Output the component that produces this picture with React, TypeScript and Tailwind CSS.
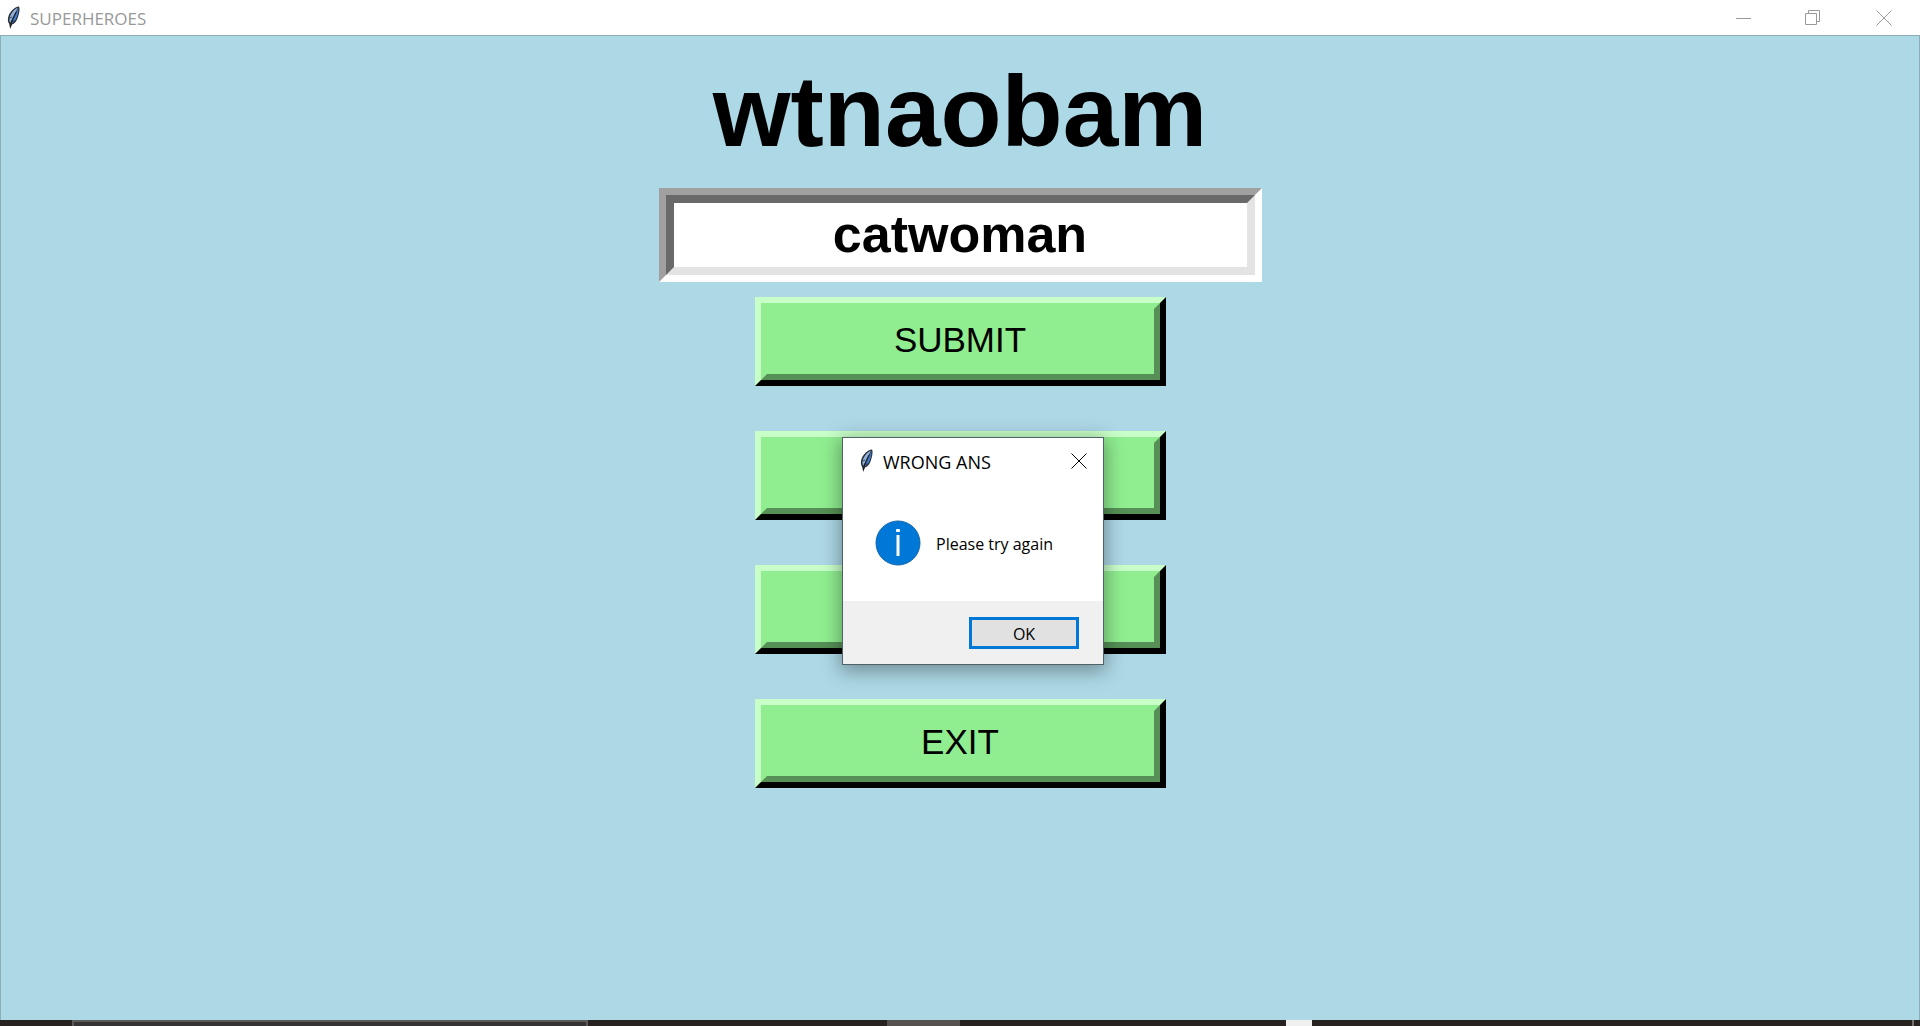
import type { ReactNode } from "react";

function Feather() {
  return (
    <svg className="h-6 w-4 shrink-0" viewBox="0 0 16 24" aria-hidden="true">
      <path d="M13 .5C8.500 1 4 5.500 2.500 10c-1 3-.800 6 .700 8L4.200 23l1.800-4.500c3-1 5-4 6-7.500C13.200 7.500 14.200 3 13 .5z" fill="#2a2e35" />
      <path d="M12 1.500C8.500 3 5 7 3.800 11c-.600 2.300-.500 4.300.400 5.800C7.500 11 9.500 6.500 12 1.500z" fill="#8fb0da" />
      <path d="M12.300 2C10.500 7.500 8 12 5.500 17.500c2.700-1.300 4.500-3.800 5.500-7C12 7.500 12.800 4.500 12.300 2z" fill="#3f7fd0" />
      <path d="M10 6C8 10 5.500 14.500 4.300 21" stroke="#16181c" strokeWidth="0.900" fill="none" />
      <path d="M3.500 12l2.500-1M6 16l2.500-1.500" stroke="#2a2e35" strokeWidth="0.800" fill="none" />
    </svg>
  );
}

function Cross() {
  return (
    <svg className="size-4" viewBox="0 0 16 16" stroke="currentColor" fill="none" aria-hidden="true">
      <path d="M.5.5l15 15M15.500.5l-15 15" />
    </svg>
  );
}

function BevelButton({ label, children }: { label?: string; children?: ReactNode }) {
  return (
    <button
      aria-label={label}
      className="block w-[411px] max-w-full border-6 border-t-[#c8ffc8] border-r-black border-b-black border-l-[#c8ffc8]"
    >
      <span className="flex h-[77px] items-center justify-center border-6 border-t-[#90ee90] border-r-[#569056] border-b-[#569056] border-l-[#90ee90] bg-[#90ee90] pb-[3px] text-[35px] leading-10">
        {children}
      </span>
    </button>
  );
}

export default function App() {
  return (
    <div className="flex min-h-screen flex-col bg-[#add8e6] font-['Liberation_Sans',Arial,sans-serif] text-black">
      <header className="flex h-[35px] items-center bg-white pl-1.5 text-[#999]">
        <Feather />
        <span className="ml-2 pt-0.5 font-['Open_Sans',sans-serif] text-[17px] leading-6">SUPERHEROES</span>
        <div className="ml-auto flex">
          <button aria-label="Minimize" className="flex h-8 w-[70px] items-center justify-center">
            <svg className="size-4" viewBox="0 0 16 16" stroke="currentColor" aria-hidden="true">
              <path d="M1 8.500h15" />
            </svg>
          </button>
          <button aria-label="Restore" className="flex h-8 w-[70px] items-center justify-center">
            <svg className="size-4" viewBox="0 0 16 16" stroke="currentColor" fill="none" aria-hidden="true">
              <path d="M.5 3.500h11v11H.5zM3.500 3V.5h11v11H12" />
            </svg>
          </button>
          <button aria-label="Close" className="flex h-8 w-[72px] items-center justify-center">
            <Cross />
          </button>
        </div>
      </header>
      <main className="flex flex-1 flex-col items-center border border-b-0 border-[#8badb8] pt-5">
        <h1 className="text-[100px] leading-[110px] font-bold">wtnaobam</h1>
        <div className="mt-[22px] w-[603px] max-w-full border-7 border-t-[#a0a0a0] border-r-white border-b-white border-l-[#a0a0a0]">
          <input
            aria-label="Your answer"
            defaultValue="catwoman"
            className="block h-20 w-full border-8 border-t-[#696969] border-r-[#e3e3e3] border-b-[#e3e3e3] border-l-[#696969] bg-white pb-0.5 text-center text-[52px] font-bold outline-none"
          />
        </div>
        <div className="mt-[15px] flex flex-col gap-[45px]">
          <BevelButton>SUBMIT</BevelButton>
          <BevelButton label="Second option" />
          <BevelButton label="Third option" />
          <BevelButton>EXIT</BevelButton>
        </div>
      </main>
      <footer className="flex h-1.5 bg-[#282320]">
        <div className="ml-[72px] w-[516px] border-2 border-b-0 border-[#5c5a5b] bg-[#353334]" />
        <div className="ml-[299px] w-[73px] bg-[#56504e]" />
        <div className="ml-[326px] w-[26px] bg-[#f0f0f0]" />
        <div className="mr-1.5 ml-auto w-0.5 bg-[#77706e]" />
      </footer>
      <div
        role="dialog"
        aria-labelledby="dialog-title"
        className="absolute top-[437px] left-1/2 -ml-[118px] flex w-[262px] flex-col border border-[#4f6367] bg-white font-['Open_Sans',sans-serif] shadow-[0_4px_18px_2px_rgba(0,0,0,0.35)]"
      >
        <div className="flex h-[46px] items-center pl-4">
          <Feather />
          <h2 id="dialog-title" className="ml-2 pt-0.5 text-[18px] leading-6">
            WRONG ANS
          </h2>
          <button aria-label="Close dialog" className="mr-4 ml-auto">
            <Cross />
          </button>
        </div>
        <div className="flex h-[117px] items-center gap-[15px] pl-8">
          <svg className="size-[46px]" viewBox="0 0 46 46" aria-hidden="true">
            <circle cx="23" cy="23" r="22" fill="#0078d7" stroke="#1565a8" />
            <rect x="21" y="9" width="4" height="3" rx="1" fill="#fff" />
            <path d="M23 15v21" stroke="#fff" strokeWidth="3" />
          </svg>
          <p className="pt-0.5 text-base whitespace-nowrap">Please try again</p>
        </div>
        <div className="flex h-[63px] items-center justify-end bg-[#f0f0f0] pr-6">
          <button className="h-8 w-[110px] border-3 border-[#0078d7] bg-[#e1e1e1] pt-0.5 text-base leading-6">
            OK
          </button>
        </div>
      </div>
    </div>
  );
}
